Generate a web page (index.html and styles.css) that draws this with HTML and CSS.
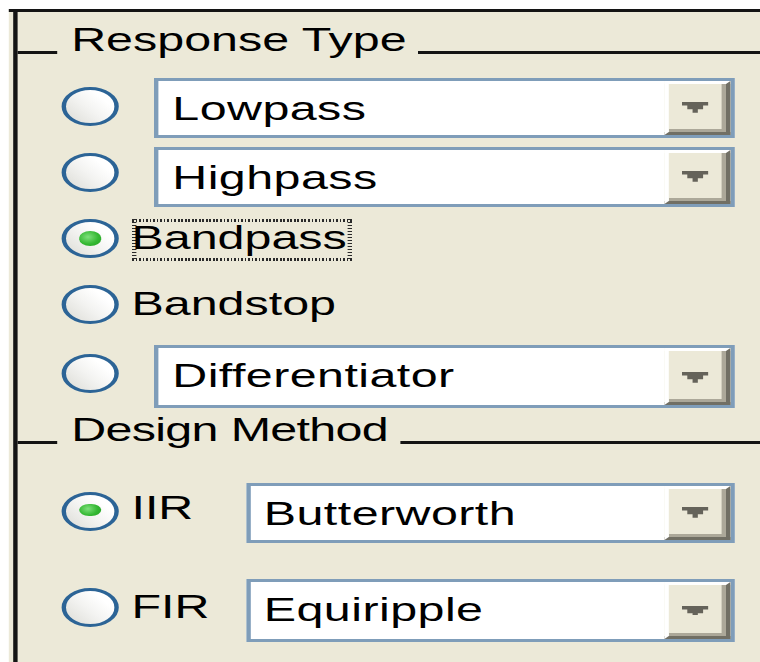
FILE: index.html
```html
<!DOCTYPE html>
<html lang="en">
<head>
<meta charset="utf-8">
<title>Filter Specification</title>
<link rel="stylesheet" href="styles.css">
</head>
<body>
<div class="stage">
  <div class="dialog">
    <div class="group">
      <div class="legend legend-response">
        <span class="rule lead"></span>
        <span class="legend-text">Response Type</span>
        <span class="rule tail"></span>
      </div>

      <div class="row field row-lowpass">
        <span class="radio"></span>
        <div class="combo">
          <span class="combo-value">Lowpass</span>
          <span class="combo-btn"><svg class="arrow" viewBox="0 0 6 3.6" width="6" height="3.6"><path d="M0 0H6V1.2H4.8V2.4H3.6V3.6H2.4V2.4H1.2V1.2H0Z"/></svg></span>
        </div>
      </div>

      <div class="row field row-highpass">
        <span class="radio"></span>
        <div class="combo">
          <span class="combo-value">Highpass</span>
          <span class="combo-btn"><svg class="arrow" viewBox="0 0 6 3.6" width="6" height="3.6"><path d="M0 0H6V1.2H4.8V2.4H3.6V3.6H2.4V2.4H1.2V1.2H0Z"/></svg></span>
        </div>
      </div>

      <div class="row plain row-bandpass">
        <span class="radio on"></span>
        <span class="choice focus">Bandpass</span>
      </div>

      <div class="row plain row-bandstop">
        <span class="radio"></span>
        <span class="choice">Bandstop</span>
      </div>

      <div class="row field row-diff">
        <span class="radio"></span>
        <div class="combo">
          <span class="combo-value">Differentiator</span>
          <span class="combo-btn"><svg class="arrow" viewBox="0 0 6 3.6" width="6" height="3.6"><path d="M0 0H6V1.2H4.8V2.4H3.6V3.6H2.4V2.4H1.2V1.2H0Z"/></svg></span>
        </div>
      </div>

      <div class="legend legend-method">
        <span class="rule lead"></span>
        <span class="legend-text">Design Method</span>
        <span class="rule tail"></span>
      </div>

      <div class="row field method row-iir">
        <span class="radio on"></span>
        <span class="choice">IIR</span>
        <div class="combo">
          <span class="combo-value">Butterworth</span>
          <span class="combo-btn"><svg class="arrow" viewBox="0 0 6 3.6" width="6" height="3.6"><path d="M0 0H6V1.2H4.8V2.4H3.6V3.6H2.4V2.4H1.2V1.2H0Z"/></svg></span>
        </div>
      </div>

      <div class="row field method row-fir">
        <span class="radio"></span>
        <span class="choice">FIR</span>
        <div class="combo">
          <span class="combo-value">Equiripple</span>
          <span class="combo-btn"><svg class="arrow" viewBox="0 0 6 3.6" width="6" height="3.6"><path d="M0 0H6V1.2H4.8V2.4H3.6V3.6H2.4V2.4H1.2V1.2H0Z"/></svg></span>
        </div>
      </div>
    </div>
  </div>
</div>
</body>
</html>
```

FILE: styles.css
```css
html, body {
  margin: 0;
  padding: 0;
  background: #fff;
  overflow: hidden;
}

body {
  width: 760px;
  height: 662px;
  font-family: "Liberation Sans", Arial, sans-serif;
  font-size: 11px;
  color: #000;
}

.stage {
  width: 172.73px;
  height: 220.67px;
  box-sizing: border-box;
  padding: 3.3px 0 0 1.6px;
  transform: scale(4.4, 3);
  transform-origin: 0 0;
}

.dialog {
  height: 100%;
  box-sizing: border-box;
  background: #ECE9D8;
  border-top: 1px solid #141414;
  padding-left: 1.4px;
}

.group {
  height: 100%;
  border-left: 1px solid #141414;
  display: flex;
  flex-direction: column;
}

/* Titled group separators */
.legend {
  display: flex;
  flex: none;
  height: 13px;
  line-height: 13px;
}

.legend-response { margin-top: 2.9px; }
.legend-method { margin-top: 1.5px; }

.rule {
  height: 1px;
  background: #141414;
  margin-top: 9.5px;
}

.rule.lead {
  width: 9px;
  flex: none;
}

.rule.tail {
  flex: 1;
  margin-left: 2.4px;
}

.legend-text {
  margin-left: 3.2px;
  white-space: nowrap;
}

.legend-method .legend-text {
  letter-spacing: -0.15px;
}

/* Option rows */
.row {
  display: flex;
  align-items: center;
  flex: none;
}

.row.field { height: 20.5px; }
.row.plain { height: 14px; }

.row-lowpass { margin-top: 5.8px; }
.row-highpass { margin-top: 2.1px; }
.row-bandpass { margin-top: 3.6px; }
.row-bandstop { margin-top: 8.3px; }
.row-diff { margin-top: 6.5px; }
.row-iir { margin-top: 10.3px; }
.row-fir { margin-top: 12.1px; }

/* Radio buttons */
.radio {
  flex: none;
  width: 13px;
  height: 13px;
  box-sizing: border-box;
  border: 1px solid #2c6496;
  border-radius: 50%;
  margin-left: 9.9px;
  background: linear-gradient(50deg, #dcdcd6 0%, #f3f3f1 45%, #ffffff 75%);
  display: flex;
  align-items: center;
  justify-content: center;
}

.field .radio { margin-bottom: 2px; }

.radio.on::after {
  content: "";
  width: 5px;
  height: 4.5px;
  border-radius: 50%;
  background: radial-gradient(circle at 40% 40%, #7fe07c 0%, #35b833 55%, #21a121 100%);
}

/* Radio captions */
.choice {
  margin-left: 3px;
  padding-right: 1px;
  line-height: 13.7px;
  white-space: nowrap;
}

.choice.focus {
  background:
    repeating-linear-gradient(90deg, #2a2a2a 0 0.4px, transparent 0.4px 0.8px) 0 0 / 100% 1px no-repeat,
    repeating-linear-gradient(90deg, #2a2a2a 0 0.4px, transparent 0.4px 0.8px) 0 100% / 100% 1px no-repeat,
    repeating-linear-gradient(180deg, #2a2a2a 0 0.5px, transparent 0.5px 1px) 0 0 / 1px 100% no-repeat,
    repeating-linear-gradient(180deg, #2a2a2a 0 0.5px, transparent 0.5px 1px) 100% 0 / 1px 100% no-repeat;
}

.method .choice {
  width: 24.9px;
  flex: none;
  margin-bottom: 1.6px;
}

/* Drop-down lists */
.combo {
  flex: 1;
  height: 100%;
  box-sizing: border-box;
  border: 1px solid #7F9DB9;
  background: #fff;
  display: flex;
  margin-right: 6.1px;
}

.radio + .combo { margin-left: 8.1px; }

.combo-value {
  flex: 1;
  padding-left: 3.2px;
  line-height: 18px;
  letter-spacing: 0.1px;
  white-space: nowrap;
  overflow: hidden;
}

.combo-btn {
  flex: none;
  width: 14.5px;
  box-sizing: border-box;
  border-top: 1px solid #fff;
  border-left: 1px solid #fff;
  border-right: 1px solid #716F64;
  border-bottom: 1px solid #716F64;
  box-shadow: inset -1px -1px 0 #ACA899;
  background: #ECE9D8;
  display: flex;
  align-items: center;
  justify-content: center;
}

.arrow {
  display: block;
  margin-right: 1px;
  fill: #65635a;
}
```
